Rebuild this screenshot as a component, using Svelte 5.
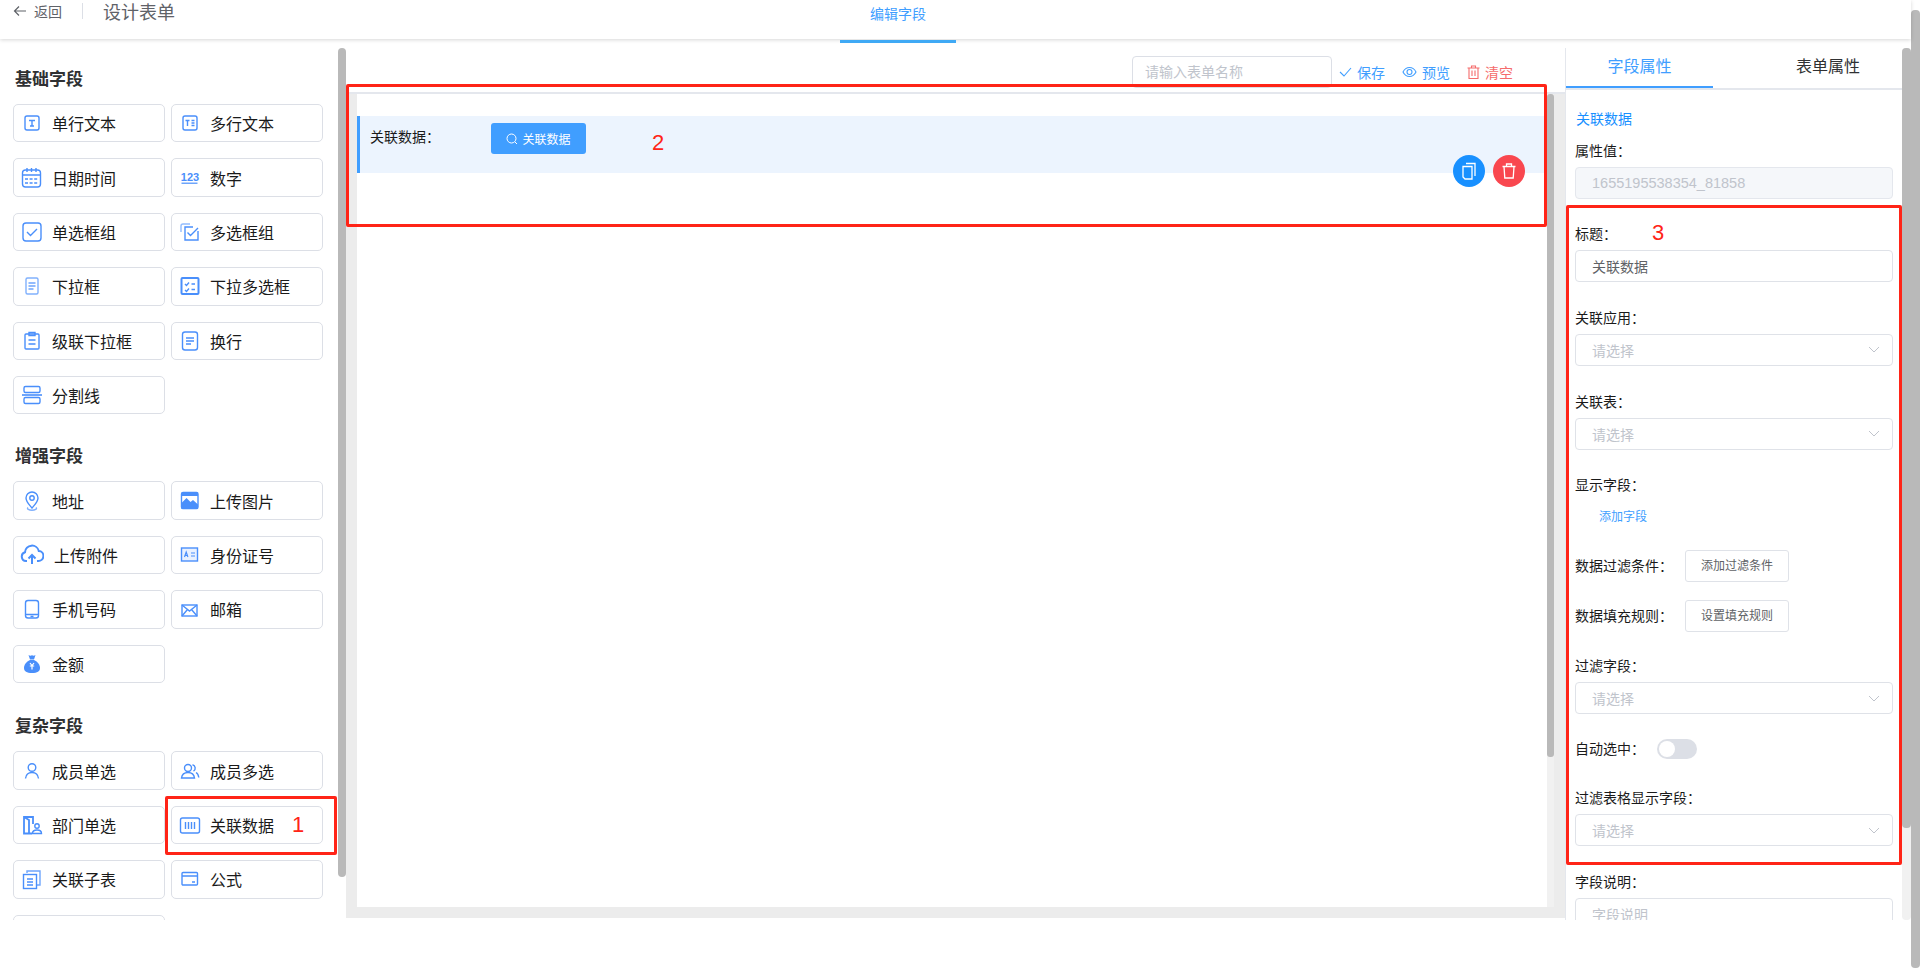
<script>
	const icons = {
		text: '<rect x="5" y="5" width="14" height="14" rx="2"/><path d="M9 9.500h6M12 9.500v5M10 15h4"/>',
		textarea: '<rect x="5" y="5" width="14" height="14" rx="2"/><path d="M7.500 9.500h4M9.500 9.500v5.500M13.500 9.500h3M13.500 12h3M13.500 14.500h3"/>',
		date: '<rect x="2.500" y="4" width="18" height="17" rx="3"/><path d="M7 2v4M11.500 2v4M16 2v4M2.500 9h18"/><path d="M5 13h13M5 17h13" stroke-dasharray="3 1.600" stroke-width="1.600"/>',
		number: '<text x="12" y="15" text-anchor="middle" font-size="11" font-weight="700" fill="currentColor" stroke="none" font-family="Liberation Sans, sans-serif">123</text><path d="M3.500 17.200h16" stroke-width="1.200"/>',
		radio: '<rect x="3" y="3" width="18" height="18" rx="3"/><path d="M7 12l3.500 3.500L17 9"/>',
		checkbox: '<path d="M3 12V6a2 2 0 0 1 2-2h7" opacity=".6"/><path d="M20 11v9H7V7h8"/><path d="M9.500 12.500l3 3L20 8"/>',
		select: '<rect x="6" y="4" width="12" height="16" rx="1.500" opacity=".7"/><path d="M8.500 9h7M8.500 12h7M8.500 15h5" opacity=".8"/>',
		multi: '<rect x="3.500" y="4" width="17" height="16" rx="1" stroke-width="2"/><path d="M7 10l1.500 1.500L11 8.500M7 16l1.500 1.500L11 14.500M13.500 10H17M13.500 15.500H17"/>',
		cascade: '<rect x="5" y="5" width="14" height="15" rx="1"/><path d="M9 3.500h6v3H9zM8.500 11h7M8.500 15h7"/>',
		wrap: '<rect x="4.500" y="3" width="15" height="18" rx="2.500"/><path d="M8 9h8M8 12h8M8 15h5"/>',
		divider: '<rect x="4" y="3.500" width="16" height="6" rx="1.500"/><rect x="4" y="14.500" width="16" height="6" rx="1.500"/><path d="M2 12h20" stroke-width="1.600"/>',
		address: '<path d="M12 3a6 6 0 0 0-6 6c0 4 4 7.500 6 10 2-2.500 6-6 6-10a6 6 0 0 0-6-6z"/><circle cx="12" cy="9" r="2.200"/><path d="M8 18.500c-1.500 1.500 1 2.700 4 2.700s5.500-1.200 4-2.700" opacity=".7"/>',
		image: '<rect x="3.500" y="3.500" width="16.500" height="16" rx="1.500"/><path d="M3.500 14l5-5 4 4 2.500-2 5 4.500v4.500h-16.500z" fill="currentColor" stroke="none"/><path d="M3.500 4h16.500v3h-16.500z" fill="currentColor" stroke="none"/>',
		upload: '<path d="M7 18H6a4.500 4.500 0 0 1-1-8.800A7 7 0 0 1 18.800 8a5 5 0 0 1-.8 10h-1" stroke-width="2"/><path d="M12 21v-8M8.500 15.500L12 12l3.500 3.500" stroke-width="2"/>',
		idcard: '<rect x="3.500" y="5" width="16" height="13" fill="currentColor" fill-opacity=".12"/><path d="M6.500 14l1.700-5 1.700 5M7.200 12.500h2M13 10h4M13 13h4" stroke-width="1.200"/>',
		phone: '<rect x="5.500" y="3.500" width="13" height="17.500" rx="2.500"/><path d="M5.500 17.500h13M10.500 19.500h3"/>',
		mail: '<rect x="4" y="8" width="15" height="11"/><path d="M4 8l7.500 6 7.500-6M4 19l5.500-6.500M19 19l-5.500-6.500"/>',
		money: '<path d="M8.500 3c1.200.9 2.400.9 3.500.2 1.100.7 2.300.7 3.500-.2l-1.500 4.500h-4z" fill="currentColor" stroke="none"/><path d="M10 8h4c3.800 1.500 6 5 6 8 0 3.500-2.700 5-8 5s-8-1.500-8-5c0-3 2.200-6.500 6-8z" fill="currentColor" stroke="none"/><path d="M10 11l2 2.500 2-2.500M9.800 14h4.400M12 13.500v4" stroke="#fff" stroke-width="1.200"/>',
		user: '<circle cx="12" cy="8.500" r="3.800"/><path d="M5.500 19.500c.5-4 3-6 6.500-6s6 2 6.500 6"/>',
		users: '<circle cx="10" cy="9" r="3.500"/><path d="M3.500 19c.5-4 3-5.500 6.500-5.500s6 1.500 6.500 5.500zM14.500 5.800a3.500 3.500 0 0 1 1 6.400M18 13.500c1.500.8 2.500 2.700 2.800 5"/>',
		dept: '<path d="M12 20.500H4V4h9v7M4 4l5 3v13.500" stroke-width="1.800"/><circle cx="17" cy="13" r="2.200"/><path d="M12.500 20.500c0-2.500 2-3.500 4.500-3.500s4.500 1 4.500 3.500z"/>',
		relation: '<rect x="2.500" y="5" width="19" height="15" rx="2"/><path d="M7.500 9v7M10.500 9v7M13.500 9v7M16.500 9v7"/>',
		subform: '<path d="M7 6V4h13v14h-3" opacity=".8"/><rect x="3.500" y="7.500" width="13" height="14"/><path d="M7 12h6M7 15h6M7 18h6"/>',
		formula: '<rect x="4" y="5.500" width="15.500" height="12.500" rx="1"/><path d="M4 9h15.500M14 15h3"/>'
	};

	const groups = [
		{
			title: '基础字段',
			items: [
				['单行文本', 'text'], ['多行文本', 'textarea'], ['日期时间', 'date'], ['数字', 'number'],
				['单选框组', 'radio'], ['多选框组', 'checkbox'], ['下拉框', 'select'], ['下拉多选框', 'multi'],
				['级联下拉框', 'cascade'], ['换行', 'wrap'], ['分割线', 'divider']
			]
		},
		{
			title: '增强字段',
			items: [
				['地址', 'address'], ['上传图片', 'image'], ['上传附件', 'upload'], ['身份证号', 'idcard'],
				['手机号码', 'phone'], ['邮箱', 'mail'], ['金额', 'money']
			]
		},
		{
			title: '复杂字段',
			items: [
				['成员单选', 'user'], ['成员多选', 'users'], ['部门单选', 'dept'], ['关联数据', 'relation'],
				['关联子表', 'subform'], ['公式', 'formula'], ['', '']
			]
		}
	];
</script>

{#snippet chevron()}
	<svg class="chevron" width="12" height="7" viewBox="0 0 12 7" fill="none" stroke="currentColor"><path d="M1 1l5 5 5-5" /></svg>
{/snippet}

{#snippet selectBox()}
	<div class="input select"><span class="placeholder">请选择</span>{@render chevron()}</div>
{/snippet}

<div class="page">
	<div class="content">
		<header>
			<div class="head-left">
				<svg class="back-arrow" width="14" height="12" viewBox="0 0 14 12" fill="none" stroke="currentColor" stroke-width="1.200"><path d="M13 6H1.500M6 1.500L1.500 6 6 10.500" /></svg>
				<span class="back">返回</span>
				<span class="head-divider"></span>
				<span class="head-title">设计表单</span>
			</div>
			<div class="head-tab">编辑字段</div>
		</header>

		<div class="main">
			<aside class="left">
				<div class="left-list">
					{#each groups as group}
						<section class="group">
							<h3>{group.title}</h3>
							<div class="grid">
								{#each group.items as [label, icon]}
									<div class="field-btn">
										<svg class="ficon" class:wide={icon === 'upload'} width="24" height="24" viewBox="0 0 24 24" fill="none" stroke="currentColor" stroke-width="1.400">
											{#if icon}{@html icons[icon]}{/if}
										</svg>
										<span>{label}</span>
									</div>
								{/each}
							</div>
						</section>
					{/each}
				</div>
				<div class="left-thumb"></div>
			</aside>

			<section class="center">
				<div class="toolbar">
					<div class="name-input">请输入表单名称</div>
					<span class="action">
						<svg width="13" height="10" viewBox="0 0 13 10" fill="none" stroke="currentColor" stroke-width="1.100"><path d="M1 5l4 4 7-8" /></svg>
						保存
					</span>
					<span class="action">
						<svg width="15" height="12" viewBox="0 0 15 12" fill="none" stroke="currentColor" stroke-width="1.100"><path d="M1 6c1.500-3 3.800-4.500 6.500-4.500S12.500 3 14 6c-1.500 3-3.800 4.500-6.500 4.500S2.500 9 1 6z" /><circle cx="7.500" cy="6" r="2.500" /></svg>
						预览
					</span>
					<span class="action danger">
						<svg width="13" height="14" viewBox="0 0 13 14" fill="none" stroke="currentColor" stroke-width="1.100"><path d="M.5 3h12M4.500 3V1h4v2M2 3v10.500h9V3M5 5.500v5.500M8 5.500v5.500" /></svg>
						清空
					</span>
				</div>

				<div class="canvas">
					<div class="card">
						<div class="item">
							<span class="item-label">关联数据：</span>
							<div class="item-btn">
								<svg width="12" height="12" viewBox="0 0 12 12" fill="none" stroke="currentColor"><circle cx="5.500" cy="5.500" r="4.500" /><path d="M9 9l2 2" /></svg>
								关联数据
							</div>
							<div class="item-tools">
								<span class="round copy">
									<svg width="16" height="18" viewBox="0 0 16 18" fill="none" stroke="#fff" stroke-width="1.300"><path d="M5 1.500h9V14" /><path d="M2 4.500h9v12.500H4l-2-2z" /></svg>
								</span>
								<span class="round del">
									<svg width="14" height="16" viewBox="0 0 14 16" fill="none" stroke="#fff" stroke-width="1.300"><path d="M.5 3.500h13M4.500 3.500V1h5v2.500M2 3.500l.8 11.500h8.400L12 3.500" /></svg>
								</span>
							</div>
						</div>
						<div class="card-track"><div class="card-thumb"></div></div>
					</div>
				</div>
			</section>

			<aside class="right">
				<div class="right-panel">
					<div class="tabs">
						<div class="tab active">字段属性</div>
						<div class="tab">表单属性</div>
					</div>
					<div class="form">
						<div class="type-link">关联数据</div>
						<div class="field">
							<label for="prop-value">属性值：</label>
							<div id="prop-value" class="input disabled">1655195538354_81858</div>
						</div>
						<div class="field">
							<label for="title">标题：</label>
							<div id="title" class="input value">关联数据</div>
						</div>
						<div class="field"><label for="app">关联应用：</label>{@render selectBox()}</div>
						<div class="field"><label for="table">关联表：</label>{@render selectBox()}</div>
						<div class="field show-field">
							<label for="cols">显示字段：</label>
							<div class="add-link">添加字段</div>
						</div>
						<div class="row">
							<span class="row-label">数据过滤条件：</span>
							<div class="plain-btn">添加过滤条件</div>
						</div>
						<div class="row">
							<span class="row-label">数据填充规则：</span>
							<div class="plain-btn">设置填充规则</div>
						</div>
						<div class="field filter"><label for="filter">过滤字段：</label>{@render selectBox()}</div>
						<div class="switch-row">
							<span>自动选中：</span>
							<span class="switch"><i></i></span>
						</div>
						<div class="field"><label for="cols2">过滤表格显示字段：</label>{@render selectBox()}</div>
						<div class="field">
							<label for="desc">字段说明：</label>
							<div id="desc" class="input"><span class="placeholder">字段说明</span></div>
						</div>
					</div>
				</div>
				<div class="right-track"><div class="right-thumb"></div></div>
			</aside>
		</div>
	</div>

	<div class="page-scroll"><div class="page-thumb"></div></div>

	<!-- 标注框 -->
	<div class="mark mark-1"></div>
	<div class="mark mark-2"></div>
	<div class="mark mark-3"></div>
	<span class="mark-num num-1">1</span>
	<span class="mark-num num-2">2</span>
	<span class="mark-num num-3">3</span>
</div>

<style>
	:global(body) {
		margin: 0;
		background: #fff;
		font-family: "Liberation Sans", "Noto Sans CJK SC", sans-serif;
		color: #222;
	}

	.page {
		position: relative;
		display: flex;
		height: 969px;
		overflow: hidden;
	}

	.content {
		flex: 1;
		min-width: 0;
	}

	header {
		position: relative;
		z-index: 1;
		display: flex;
		height: 39px;
		background: #fff;
		box-shadow: 0 1px 4px rgba(0, 0, 0, 0.16);
	}

	.head-left {
		display: flex;
		align-items: center;
		width: 827px;
		height: 22px;
		padding-left: 13px;
		color: #5f6268;
	}

	.back-arrow {
		margin-right: 7px;
	}

	.back {
		font-size: 14px;
	}

	.head-divider {
		width: 1px;
		height: 16px;
		margin: 0 20px;
		background: #dcdfe6;
	}

	.head-title {
		font-size: 18px;
	}

	.head-tab {
		box-sizing: border-box;
		width: 116px;
		height: 43px;
		padding-top: 4px;
		border-bottom: 3px solid #3fa9f5;
		text-align: center;
		font-size: 14px;
		line-height: 20px;
		color: #409eff;
	}

	.main {
		display: flex;
		height: 872px;
		padding-top: 9px;
	}

	.left {
		position: relative;
		width: 346px;
		flex-shrink: 0;
		overflow: hidden;
	}

	.left-list {
		padding: 20px 0 0 13px;
	}

	.left-thumb {
		position: absolute;
		top: 0;
		right: 0;
		width: 8px;
		height: 829px;
		border-radius: 4px;
		background: #b9b9b9;
	}

	.group {
		margin-bottom: 31px;
	}

	.group + .group {
		margin-bottom: 32.500px;
	}

	h3 {
		margin: 0 0 12px 2px;
		font-size: 17px;
		line-height: 24px;
		font-weight: 700;
		color: #303133;
	}

	.grid {
		display: grid;
		grid-template-columns: 152px 152px;
		column-gap: 6px;
		row-gap: 16px;
	}

	.field-btn {
		box-sizing: border-box;
		display: flex;
		align-items: center;
		height: 38.400px;
		padding-left: 6px;
		border: 1px solid #dcdfe6;
		border-radius: 5px;
		font-size: 16px;
		color: #1a1a1a;
		background: #fff;
	}

	.ficon {
		flex-shrink: 0;
		margin-right: 8px;
		color: #4a8ffb;
	}

	.ficon.wide {
		margin-right: 10px;
	}

	.center {
		flex: 1;
		min-width: 0;
	}

	.toolbar {
		display: flex;
		align-items: center;
		justify-content: flex-end;
		box-sizing: border-box;
		height: 44px;
		padding: 8px 52px 4px 0;
		font-size: 14px;
	}

	.name-input {
		box-sizing: border-box;
		width: 200px;
		height: 32px;
		margin-right: 7px;
		padding-left: 12px;
		border: 1px solid #dcdfe6;
		border-radius: 4px;
		line-height: 30px;
		color: #c0c4cc;
	}

	.action {
		display: flex;
		align-items: center;
		gap: 5px;
		margin-left: 17px;
		color: #409eff;
	}

	.name-input + .action {
		margin-left: 0;
	}

	.action.danger {
		color: #f56c6c;
	}

	.canvas {
		box-sizing: border-box;
		height: 826px;
		padding: 0 11px 11px 11px;
		border-top: 2px solid #e4e7ed;
		background: #ececec;
	}

	.card {
		position: relative;
		box-sizing: border-box;
		height: 100%;
		padding: 22px 7px 0 0;
		background: #fff;
	}

	.card-track {
		position: absolute;
		top: 0;
		right: 0;
		bottom: 0;
		width: 7px;
		background: #f1f1f1;
	}

	.card-thumb {
		height: 663px;
		border-radius: 3px;
		background: #b9b9b9;
	}

	.item {
		position: relative;
		display: flex;
		box-sizing: border-box;
		height: 57px;
		padding: 7px 0 0 10px;
		border-left: 3px solid #409eff;
		background: #ecf4fe;
	}

	.item-label {
		width: 121px;
		font-size: 14px;
		line-height: 28px;
		color: #1a1a1a;
	}

	.item-btn {
		display: flex;
		align-items: center;
		justify-content: center;
		gap: 4px;
		width: 95px;
		height: 31px;
		border-radius: 3px;
		font-size: 12px;
		color: #fff;
		background: #409eff;
	}

	.item-tools {
		position: absolute;
		right: 22px;
		bottom: -14px;
		display: flex;
		gap: 8px;
	}

	.round {
		display: flex;
		align-items: center;
		justify-content: center;
		width: 32px;
		height: 32px;
		border-radius: 50%;
	}

	.round.copy {
		background: #1890ff;
	}

	.round.del {
		background: #f9474f;
	}

	.right {
		display: flex;
		width: 346px;
		flex-shrink: 0;
		overflow: hidden;
	}

	.right-panel {
		box-sizing: border-box;
		width: 337px;
		border-left: 1px solid #e4e7ed;
		overflow: hidden;
	}

	.tabs {
		display: flex;
		height: 40px;
		border-bottom: 2px solid #e4e7ed;
	}

	.tab {
		box-sizing: border-box;
		width: 147px;
		height: 40px;
		text-align: center;
		font-size: 16px;
		line-height: 38px;
		color: #303133;
	}

	.tab + .tab {
		width: 189px;
		text-align: left;
		text-indent: 83px;
	}

	.tab.active {
		border-bottom: 2px solid #409eff;
		color: #409eff;
	}

	.form {
		padding: 17.500px 9px 0 9px;
		font-size: 14px;
	}

	.type-link {
		margin: 0 0 10px 1px;
		line-height: 22px;
		color: #1890ff;
	}

	.field {
		margin-bottom: 24.700px;
	}

	.show-field {
		margin-bottom: 17px;
	}

	label,
	.row-label,
	.switch-row span:first-child {
		display: block;
		margin: 0 0 5px;
		line-height: 22px;
		color: #1a1a1a;
	}

	.input {
		box-sizing: border-box;
		display: flex;
		align-items: center;
		justify-content: space-between;
		height: 32px;
		padding: 0 12px 0 16px;
		border: 1px solid #dfe2e8;
		border-radius: 4px;
	}

	.value {
		color: #606266;
	}

	.disabled {
		background: #f5f7fa;
		border-color: #e4e7ed;
		font-size: 14.500px;
		color: #c0c4cc;
	}

	.placeholder {
		color: #c0c4cc;
	}

	.chevron {
		color: #c0c4cc;
	}

	.add-link {
		height: 32px;
		padding-left: 24px;
		font-size: 12px;
		line-height: 32px;
		color: #409eff;
	}

	.row {
		display: flex;
		align-items: center;
		height: 32px;
		margin-bottom: 18px;
	}

	.row-label {
		width: 110px;
		margin-bottom: 0;
	}

	.plain-btn {
		box-sizing: border-box;
		width: 104px;
		height: 32px;
		border: 1px solid #dfe2e8;
		border-radius: 3px;
		text-align: center;
		font-size: 12px;
		line-height: 30px;
		color: #606266;
	}

	.filter {
		margin-top: 23px;
		margin-bottom: 24px;
	}

	.switch-row {
		display: flex;
		align-items: center;
		height: 22px;
		margin-bottom: 27px;
	}

	.switch-row span:first-child {
		width: 82px;
		margin-bottom: 0;
	}

	.switch {
		position: relative;
		width: 40px;
		height: 20px;
		border-radius: 10px;
		background: #dcdfe6;
	}

	.switch i {
		position: absolute;
		top: 2px;
		left: 2px;
		width: 16px;
		height: 16px;
		border-radius: 50%;
		background: #fff;
	}

	.right-track {
		width: 9px;
		background: #f1f1f1;
		border-radius: 4px;
	}

	.right-thumb {
		height: 780px;
		border-radius: 4px;
		background: #b9b9b9;
	}

	.page-scroll {
		width: 9px;
		flex-shrink: 0;
		padding-top: 10px;
	}

	.page-thumb {
		height: 958px;
		border-radius: 4px;
		background: #b9b9b9;
	}

	.mark {
		position: absolute;
		box-sizing: border-box;
		border: 3px solid #ff2417;
		border-radius: 2px;
	}

	.mark-1 {
		left: 165px;
		top: 796px;
		width: 172px;
		height: 59px;
	}

	.mark-2 {
		left: 346px;
		top: 84px;
		width: 1201px;
		height: 143px;
	}

	.mark-3 {
		left: 1566px;
		top: 205px;
		width: 336px;
		height: 660px;
	}

	.mark-num {
		position: absolute;
		font-size: 22px;
		line-height: 24px;
		color: #ff2417;
	}

	.num-1 {
		left: 292px;
		top: 813px;
	}

	.num-2 {
		left: 652px;
		top: 131px;
	}

	.num-3 {
		left: 1652px;
		top: 221px;
	}
</style>
